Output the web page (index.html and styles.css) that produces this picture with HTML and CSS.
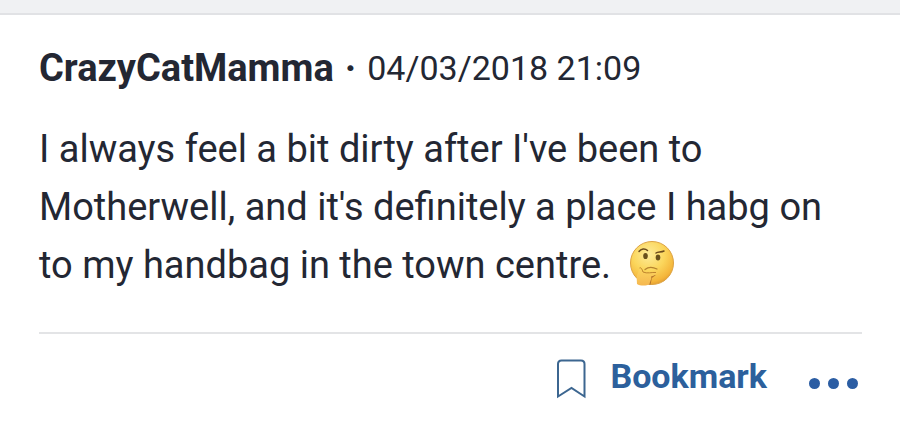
FILE: index.html
```html
<!DOCTYPE html>
<html lang="en">
<head>
<meta charset="utf-8">
<meta name="viewport" content="width=device-width, initial-scale=1">
<title>Forum post</title>
<link rel="stylesheet" href="styles.css">
</head>
<body>
<article class="post">
  <header class="post-head">
    <strong class="author">CrazyCatMamma</strong>
    <strong class="dot">·</strong>
    <time datetime="2018-03-04T21:09">04/03/2018 21:09</time>
  </header>
  <p class="body">I always feel a bit dirty after I've been to Motherwell, and it's definitely a place I habg on to my handbag in the town centre.
    <svg class="emoji" viewBox="0 0 46 46" role="img" aria-label="Thinking face">
      <defs>
        <radialGradient id="face" cx="42%" cy="30%" r="75%">
          <stop offset="0" stop-color="#fdec9a"/>
          <stop offset="0.5" stop-color="#fbd65c"/>
          <stop offset="0.85" stop-color="#f4b53a"/>
          <stop offset="1" stop-color="#dc952f"/>
        </radialGradient>
        <linearGradient id="hand" x1="0" y1="0" x2="0" y2="1">
          <stop offset="0" stop-color="#fcd760"/>
          <stop offset="1" stop-color="#f5b750"/>
        </linearGradient>
      </defs>
      <circle cx="23" cy="23" r="21.5" fill="url(#face)" stroke="#dda343"/>
      <path d="M10 11.5C12 8.5 16 8 18.5 10.5" fill="none" stroke="#6b4a1c" stroke-width="1.5" stroke-linecap="round"/>
      <path d="M27 13C29 11.5 32 12.5 35 11" fill="none" stroke="#6b4a1c" stroke-width="1.5" stroke-linecap="round"/>
      <ellipse cx="16.5" cy="16" rx="2.3" ry="3.1" fill="#68501b"/>
      <ellipse cx="29" cy="17.5" rx="2.3" ry="3" fill="#68501b"/>
      <path d="M16 29.5C19 27 24 27 28 29" fill="none" stroke="#b5822e" stroke-width="1.2" stroke-linecap="round"/>
      <path d="M20.500 44.500L22 37.500L26 34.500" fill="none" stroke="#b5742a" stroke-width="2"/>
      <path d="M10.5 28C12 27 13 29 14 32C18 34 23 32 27 32.5C28.5 33.5 27 35 22 36.5C23 39 21 41 20.5 44C18 46 11 46 8 44C8 40 7 36 9 33Z" fill="url(#hand)"/>
      <path d="M10.5 28C12 27 13 29 14 32C18 34 23 32 27 32.5" fill="none" stroke="#bf842e" stroke-width="1"/>
    </svg>
  </p>
  <footer class="actions">
    <button class="bookmark" type="button">
      <svg class="flag" viewBox="0 0 30 40" aria-hidden="true"><path d="M2 37.5V5Q2 1.5 5.5 1.5H25Q28.5 1.5 28.5 5V37.5L15.5 29Z"/></svg>
      Bookmark
    </button>
    <button class="more" type="button" aria-label="More options"><i></i><i></i><i></i></button>
  </footer>
</article>
</body>
</html>
```
FILE: styles.css
```css
body {
  margin: 0;
  background: #fff;
  border-top: 13px solid #f0f1f3;
  color: #232733;
  font-family: Roboto, sans-serif;
}
.post {
  border-top: 2px solid #e1e2e5;
  padding: 29px 38px 0 39px;
}
.post-head {
  display: flex;
  align-items: center;
  gap: 11px;
  font-size: 34px;
  line-height: 48px;
}
.author,
.dot {
  font-size: 38px;
}
.body {
  margin: 28px 0 38px;
  font-size: 38px;
  line-height: 58px;
}
.emoji {
  width: 46px;
  height: 46px;
  margin-left: 8px;
  vertical-align: -8px;
}
.actions {
  display: flex;
  justify-content: flex-end;
  align-items: center;
  gap: 42px;
  border-top: 2px solid #e3e4e6;
  padding: 18px 4px 0 0;
}
button {
  display: flex;
  align-items: center;
  border: 0;
  padding: 0;
  background: none;
  color: #2c609c;
  font: bold 34px/48px Roboto, sans-serif;
}
.bookmark {
  gap: 24px;
}
.flag {
  width: 30px;
  height: 40px;
  padding-top: 6px;
  fill: none;
  stroke: #3c6690;
  stroke-width: 2;
}
.more {
  gap: 8px;
  padding-top: 14px;
  color: #2b5da3;
}
.more i {
  width: 11px;
  height: 11px;
  border-radius: 50%;
  background: currentColor;
}
```
